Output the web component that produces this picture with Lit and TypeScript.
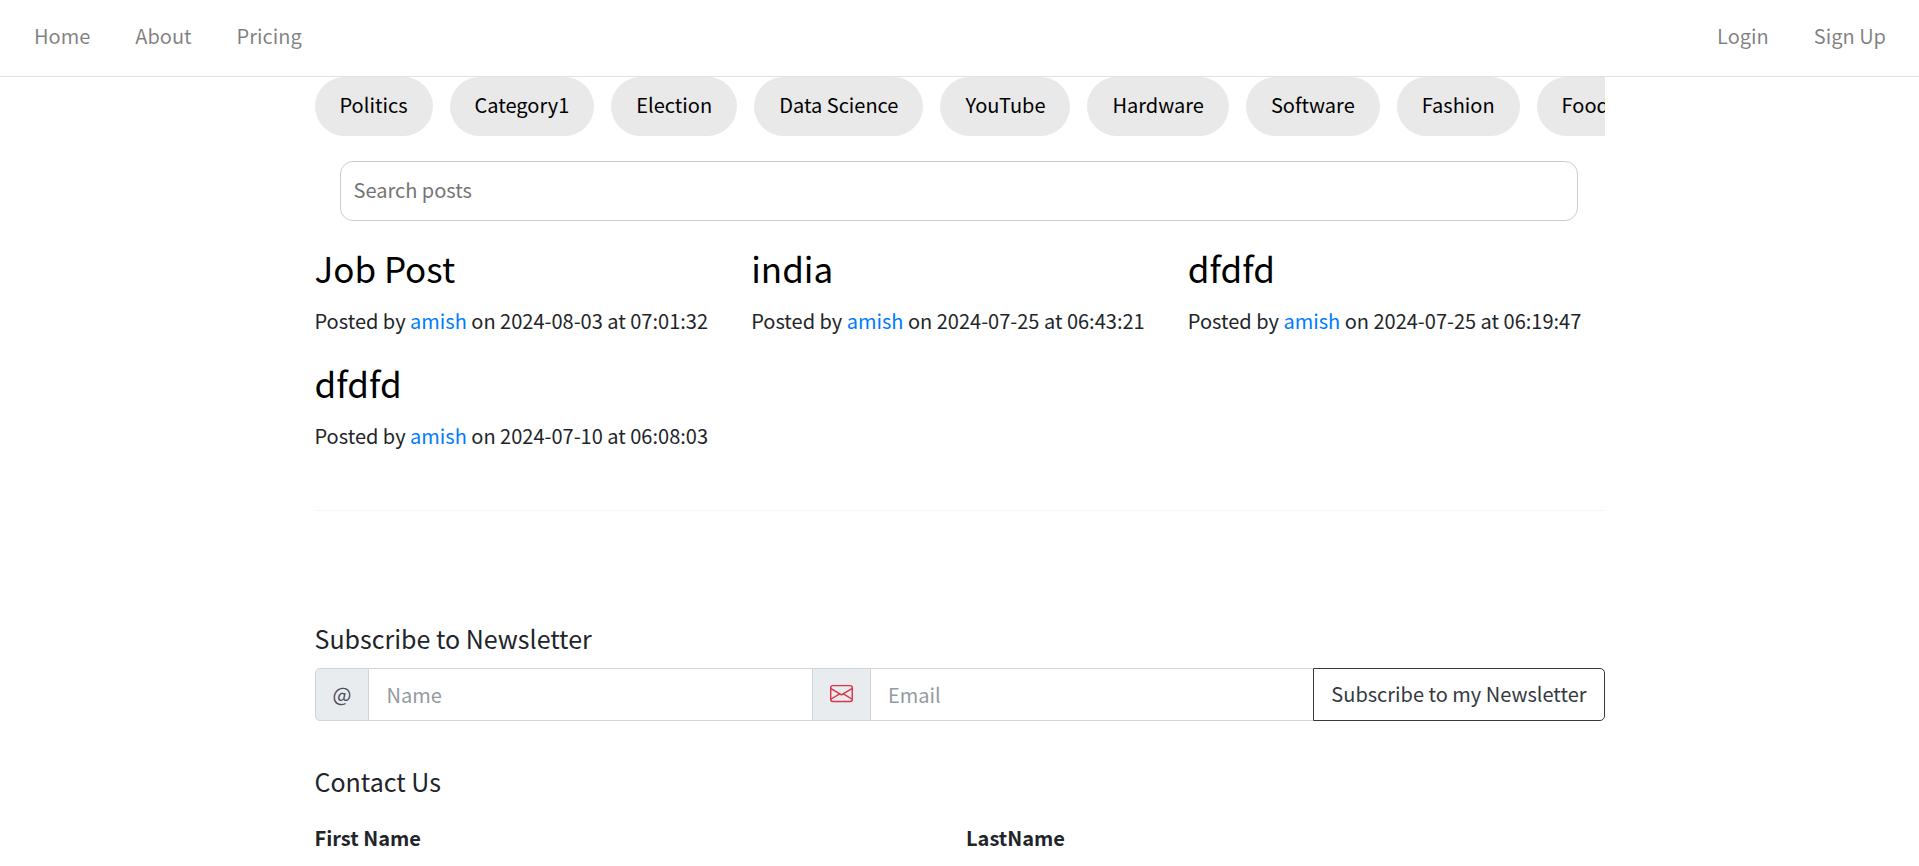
import { LitElement, html, css } from "lit";
import { customElement } from "lit/decorators.js";

const categories = [
  "Politics", "Category1", "Election", "Data Science", "YouTube",
  "Hardware", "Software", "Fashion", "Food",
];

const posts = [
  { title: "Job Post", author: "amish", date: "2024-08-03", time: "07:01:32" },
  { title: "india", author: "amish", date: "2024-07-25", time: "06:43:21" },
  { title: "dfdfd", author: "amish", date: "2024-07-25", time: "06:19:47" },
  { title: "dfdfd", author: "amish", date: "2024-07-10", time: "06:08:03" },
];

@customElement("app-root")
export class AppRoot extends LitElement {
  static styles = css`
    :host {
      display: block;
      height: 100vh;
      overflow-y: auto;
      scrollbar-width: none;
      background: #fff;
      color: #212529;
      font-family: "Noto Sans CJK JP", "Noto Sans", sans-serif;
      font-size: 20px;
      line-height: 32px;
    }
    *, *::before, *::after { box-sizing: border-box; }
    a { text-decoration: none; }
    input, button { font: inherit; margin: 0; }
    h2, h4, p { margin: 0; font-weight: 400; }

    .nav {
      display: flex;
      justify-content: space-between;
      padding: 20px 33px 24px 34px;
      border-bottom: 1px solid #dee2e6;
    }
    .group { display: flex; gap: 45px; }
    .group a { color: rgba(0, 0, 0, 0.5); }

    .container {
      max-width: 1320px;
      margin: 0 auto;
      padding: 0 15px;
    }
    .pills { display: flex; gap: 17px; overflow: hidden; }
    .pill {
      flex: none;
      padding: 12px 25px 15px;
      border-radius: 30px;
      background: #e9e9e9;
      color: #000;
    }
    .search { padding: 25px 27px 25px 25px; }
    .search input {
      display: block;
      width: 100%;
      height: 60px;
      padding: 0 13px 3px;
      border: 1px solid #ccc;
      border-radius: 13px;
      background: #fff;
      color: #212529;
    }
    .search input::placeholder { color: #757575; }

    .posts {
      display: grid;
      grid-template-columns: repeat(3, 1fr);
      gap: 24px 20px;
    }
    .posts h2 {
      margin-bottom: 16px;
      font-size: 35px;
      line-height: 43px;
      color: #000;
    }
    .posts a { color: #007bff; }

    hr {
      margin: 58px 0 111px;
      border: 0;
      border-top: 1px solid #f6f6f6;
    }
    h4 { font-size: 25px; line-height: 32px; }
    .subscribe { display: flex; margin: 14px 0 44px; height: 53px; }
    .addon {
      display: flex;
      align-items: center;
      padding: 0 17px 2px;
      border: 1px solid #ced4da;
      background: #e9ecef;
      color: #495057;
    }
    .addon.first { border-radius: 5px 0 0 5px; }
    .addon svg { display: block; width: 23px; height: 23px; color: #dc3545; }
    .subscribe input {
      flex: 1;
      min-width: 0;
      padding: 0 17px;
      border: 1px solid #ced4da;
      border-width: 1px 0;
      border-radius: 0;
      background: #fff;
      color: #495057;
    }
    .subscribe input::placeholder { color: #939ba2; }
    .subscribe button {
      padding: 0 17px 2px;
      border: 1px solid #343a40;
      border-radius: 0 5px 5px 0;
      background: #fff;
      color: #343a40;
    }
    .contact {
      display: grid;
      grid-template-columns: 1fr 1fr;
      gap: 13px;
      margin-top: 25px;
    }
    .contact label { display: block; margin-bottom: 13px; font-weight: 700; }
    .contact input {
      width: 100%;
      height: 53px;
      padding: 0 17px;
      border: 1px solid #ced4da;
      border-radius: 5px;
    }
  `;

  render() {
    return html`
      <nav class="nav">
        <div class="group">
          <a href="#home">Home</a><a href="#about">About</a><a href="#pricing">Pricing</a>
        </div>
        <div class="group">
          <a href="#login">Login</a><a href="#signup">Sign Up</a>
        </div>
      </nav>
      <main class="container">
        <div class="pills">
          ${categories.map((c) => html`<a class="pill" href="#category">${c}</a>`)}
        </div>
        <div class="search">
          <input type="search" placeholder="Search posts" aria-label="Search posts" />
        </div>
        <section class="posts">
          ${posts.map((p) => html`
            <article>
              <h2>${p.title}</h2>
              <p>Posted by <a href="#author">${p.author}</a> on ${p.date} at ${p.time}</p>
            </article>`)}
        </section>
        <hr />
        <h4>Subscribe to Newsletter</h4>
        <form class="subscribe">
          <label class="addon first" for="name">@</label>
          <input id="name" type="text" placeholder="Name" />
          <label class="addon" for="email" aria-label="Email">
            <svg viewBox="0 0 16 16" fill="currentColor" aria-hidden="true">
              <path fill-rule="evenodd" d="M14 3H2a1 1 0 0 0-1 1v8a1 1 0 0 0 1 1h12a1 1 0 0 0 1-1V4a1 1 0 0 0-1-1zM2 2a2 2 0 0 0-2 2v8a2 2 0 0 0 2 2h12a2 2 0 0 0 2-2V4a2 2 0 0 0-2-2H2z" />
              <path fill-rule="evenodd" d="M.071 4.243a.5.5 0 0 1 .686-.172L8 8.417l7.243-4.346a.5.5 0 0 1 .514.858L8 9.583.243 4.93a.5.5 0 0 1-.172-.686z" />
              <path d="M6.752 8.932l.432-.252-.504-.864-.432.252.504.864zm-6 3.5l6-3.5-.504-.864-6 3.5.504.864zm8.496-3.5l-.432-.252.504-.864.432.252-.504.864zm6 3.5l-6-3.5.504-.864 6 3.5-.504.864z" />
            </svg>
          </label>
          <input id="email" type="email" placeholder="Email" />
          <button type="button">Subscribe to my Newsletter</button>
        </form>
        <h4>Contact Us</h4>
        <form class="contact">
          <div><label for="first">First Name</label><input id="first" type="text" /></div>
          <div><label for="last">LastName</label><input id="last" type="text" /></div>
        </form>
      </main>
    `;
  }
}
